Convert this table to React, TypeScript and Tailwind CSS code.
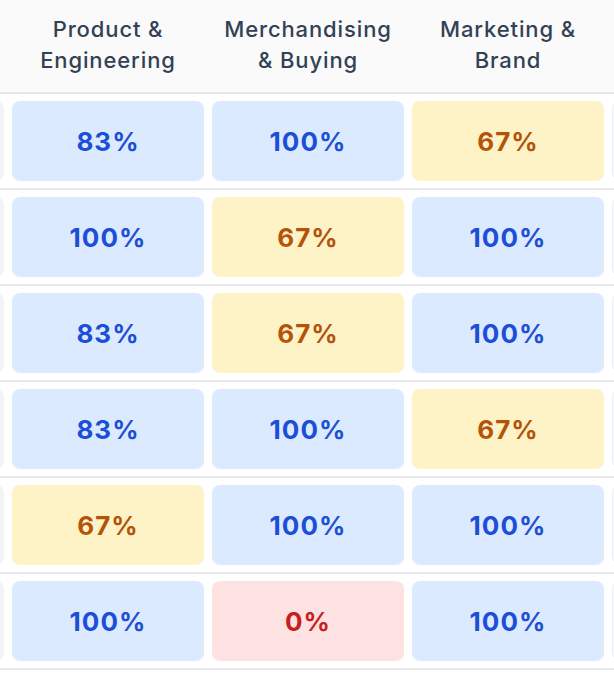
import React from "react";

type Score = number;

const columns = [
  ["Product &", "Engineering"],
  ["Merchandising", "& Buying"],
  ["Marketing &", "Brand"],
];

const rows: Score[][] = [
  [83, 100, 67],
  [100, 67, 100],
  [83, 67, 100],
  [83, 100, 67],
  [67, 100, 100],
  [100, 0, 100],
];

function tone(value: Score) {
  if (value >= 80) return "bg-[#dbeafe] text-[#1d4ed8]";
  if (value > 0) return "bg-[#fef3c7] text-[#b45309]";
  return "bg-[#fee2e2] text-[#c81e1e]";
}

function ScoreCell({ value }: { value: Score }) {
  return (
    <td className="px-1 py-[7px]">
      <div className={`flex h-20 items-center justify-center rounded-lg text-[26px] font-bold tracking-[0.04em] ${tone(value)}`}>{value}%</div>
    </td>
  );
}

export default function App() {
  return (
    <div className="h-[674px] w-[614px] overflow-hidden bg-white font-['Inter',sans-serif]">
      <table className="-ml-[192px] w-[1000px] table-fixed border-collapse">
        <colgroup>
          <col className="w-[200px]" />
          <col className="w-[200px]" />
          <col className="w-[200px]" />
          <col className="w-[200px]" />
          <col className="w-[200px]" />
        </colgroup>
        <thead>
          <tr className="h-[93px] border-b-2 border-[#e5e7eb] bg-[#fafafa]">
            <th />
            {columns.map(([a, b]) => (
              <th key={a} className="pb-[2px] text-center text-[22px] font-medium leading-[31px] tracking-[0.04em] text-[#334155]">
                <div>{a}</div>
                <div>{b}</div>
              </th>
            ))}
            <th />
          </tr>
        </thead>
        <tbody>
          {rows.map((row, i) => (
            <tr key={i} className="border-b-2 border-[#e5e7eb]">
              <td className="px-1 py-[7px]">
                <div className="h-20 rounded-lg bg-[#f3f4f6]" />
              </td>
              {row.map((value, j) => (
                <ScoreCell key={j} value={value} />
              ))}
              <td className="px-1 py-[7px]">
                <div className="h-20 rounded-lg border border-[#eceef1] bg-[#f9fafb]" />
              </td>
            </tr>
          ))}
        </tbody>
      </table>
    </div>
  );
}
